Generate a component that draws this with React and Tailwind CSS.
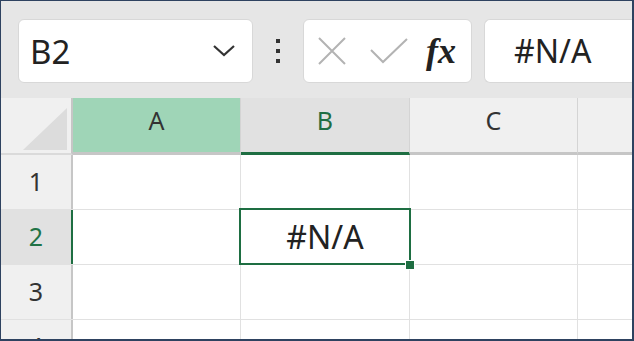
import React from "react";

const font = { fontFamily: '"Noto Sans", "Open Sans", sans-serif' };

function Chevron() {
  return (
    <svg width="24" height="14" viewBox="0 0 24 14" className="block">
      <path d="M2 2 L12 11 L22 2" fill="none" stroke="#333" strokeWidth="2.2" />
    </svg>
  );
}

function XIcon() {
  return (
    <svg width="30" height="30" viewBox="0 0 30 30" className="block">
      <path d="M2 2 L28 28 M28 2 L2 28" fill="none" stroke="#b3b3b3" strokeWidth="2" />
    </svg>
  );
}

function CheckIcon() {
  return (
    <svg width="40" height="28" viewBox="0 0 40 28" className="block">
      <path d="M2 13 L14 25 L38 2" fill="none" stroke="#b3b3b3" strokeWidth="2" />
    </svg>
  );
}

const cols = [
  { l: "A", w: "w-[168px]", bg: "bg-[#9fd5b7]", text: "text-[#333]", bb: "border-b-[#c6c6c6]" },
  { l: "B", w: "w-[169px]", bg: "bg-[#e1e1e1]", text: "text-[#1f6e43]", bb: "border-b-[#1e6e42]" },
  { l: "C", w: "w-[168px]", bg: "bg-[#f0f0f0]", text: "text-[#333]", bb: "border-b-[#c6c6c6]" },
  { l: "", w: "flex-1", bg: "bg-[#f0f0f0]", text: "text-[#333]", bb: "border-b-[#c6c6c6]" },
];

function Row({ n, selected }) {
  return (
    <div className={"relative flex h-[55px] shrink-0 border-b border-b-[#e1e1e1]" + (selected ? " z-10" : "")}>
      <div
        className={
          "w-[72px] shrink-0 flex items-center justify-center text-[25px] border-r-2 " +
          (selected
            ? "bg-[#e1e1e1] text-[#217346] border-r-[#1e6e42]"
            : "bg-[#f0f0f0] text-[#333] border-r-[#c6c6c6]")
        }
      >
        {n}
      </div>
      <div className="w-[168px] shrink-0 bg-white border-r border-r-[#e1e1e1]" />
      <div className="relative w-[169px] shrink-0 bg-white border-r border-r-[#e1e1e1] flex items-center justify-center text-[32px] text-[#222]">
        {selected && (
          <>
            <span className="leading-none">#N/A</span>
            <div className="absolute left-[-2px] top-[-2px] right-[-2px] bottom-[-1px] border-2 border-[#1e6e42]" />
            <div className="absolute right-[-6px] bottom-[-6px] w-[10px] h-[10px] bg-[#1e6e42] border border-white" />
          </>
        )}
      </div>
      <div className="w-[168px] shrink-0 bg-white border-r border-r-[#e1e1e1]" />
      <div className="flex-1 bg-white" />
    </div>
  );
}

export default function App() {
  return (
    <div
      style={font}
      className="w-[634px] h-[341px] overflow-hidden flex flex-col bg-white border-t border-l border-r-2 border-b-2 border-[#2e4260]"
    >
      {/* toolbar */}
      <div className="h-[97px] shrink-0 bg-[#e6e6e6] flex items-start pt-[18px] pl-[17px] gap-0">
        <div className="w-[235px] h-[64px] bg-white rounded-[6px] border border-[#d8d8d8] flex items-center justify-between pl-[11px] pr-[16px]">
          <span className="text-[33px] text-[#222] leading-none">B2</span>
          <Chevron />
        </div>
        <div className="w-[50px] h-[64px] flex flex-col items-center justify-center gap-[6px]">
          <div className="w-[4px] h-[4px] bg-[#333]" />
          <div className="w-[4px] h-[4px] bg-[#333]" />
          <div className="w-[4px] h-[4px] bg-[#333]" />
        </div>
        <div className="w-[169px] h-[64px] bg-white rounded-[6px] border border-[#d8d8d8] flex items-center pl-[13px]">
          <XIcon />
          <div className="ml-[22px]"><CheckIcon /></div>
          <span
            className="ml-[17px] text-[36px] italic font-bold text-[#222] leading-none"
            style={{ fontFamily: '"Liberation Serif", "DejaVu Serif", serif' }}
          >
            fx
          </span>
        </div>
        <div className="ml-[12px] flex-1 h-[64px] bg-white rounded-l-[6px] border border-r-0 border-[#d8d8d8] flex items-center pl-[29px]">
          <span className="text-[32px] text-[#222] leading-none">#N/A</span>
        </div>
      </div>
      {/* header row */}
      <div className="flex h-[57px] shrink-0 bg-[#f0f0f0]">
        <div className="relative w-[72px] shrink-0 border-r-2 border-r-[#c6c6c6] border-b-2 border-b-[#dadada]">
          <svg width="44" height="42" viewBox="0 0 44 42" className="absolute left-[22px] top-[10px]">
            <polygon points="44,0 44,42 0,42" fill="#dcdcdc" />
          </svg>
        </div>
        {cols.map((c, i) => (
          <div
            key={i}
            className={
              c.w +
              " shrink-0 flex items-center justify-center text-[25px] pb-[8px] border-b-[3px] " +
              c.bg + " " + c.text + " " + c.bb +
              (i < 3 ? " border-r border-r-[#d4d4d4]" : "")
            }
          >
            {c.l}
          </div>
        ))}
      </div>
      <Row n="1" />
      <Row n="2" selected />
      <Row n="3" />
      <Row n="4" />
    </div>
  );
}
